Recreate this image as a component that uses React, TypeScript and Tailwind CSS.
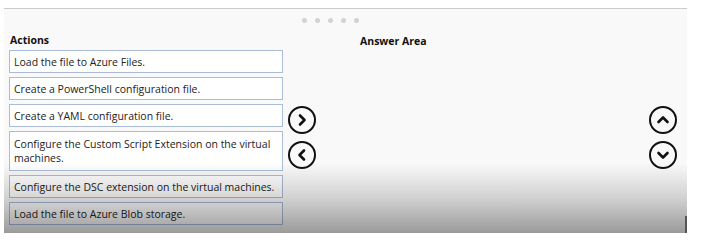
const ACTIONS = [
  { text: 'Load the file to Azure Files.', tall: false },
  { text: 'Create a PowerShell configuration file.', tall: false },
  { text: 'Create a YAML configuration file.', tall: false },
  { text: 'Configure the Custom Script Extension on the virtual machines.', tall: true },
  { text: 'Configure the DSC extension on the virtual machines.', tall: false },
  { text: 'Load the file to Azure Blob storage.', tall: false },
];

const CHEVRONS: Record<string, string> = {
  right: '5,2.5 9.5,7 5,11.5',
  left: '9,2.5 4.5,7 9,11.5',
  up: '2.5,9 7,4.5 11.5,9',
  down: '2.5,5 7,9.5 11.5,5',
};

function ArrowButton({ dir }: { dir: 'right' | 'left' | 'up' | 'down' }) {
  return (
    <button
      type="button"
      className="w-[28px] h-[28px] rounded-full border-[2.5px] border-[#111] flex items-center justify-center bg-transparent"
    >
      <svg width="14" height="14" viewBox="0 0 14 14" fill="none">
        <polyline points={CHEVRONS[dir]} stroke="#111" strokeWidth="2.6" strokeLinecap="round" strokeLinejoin="round" />
      </svg>
    </button>
  );
}

export default function App() {
  return (
    <div className="w-[701px] h-[243px] bg-white overflow-hidden" style={{ fontFamily: '"Open Sans", "Noto Sans", sans-serif' }}>
      <div className="pt-[8px]">
        <div className="relative ml-[4px] w-[683px] h-[225px] bg-[#f8f9f8] border-t border-[#c9cbc9]">
          {/* pager dots */}
          <div className="flex h-[22px] items-center gap-[8px] pl-[298px]">
            {[0, 1, 2, 3, 4].map(i => (
              <span key={i} className="w-[5px] h-[5px] rounded-full bg-[#d2d3d2]" />
            ))}
          </div>

          <div className="flex">
            {/* actions */}
            <div className="ml-[5px] w-[274px] flex flex-col">
              <div className="h-[19px] flex items-center pl-[1px] text-[10.5px] font-bold text-[#111]">Actions</div>
              <div className="flex flex-col gap-1">
                {ACTIONS.map(a => (
                  <div
                    key={a.text}
                    className={`${a.tall ? 'h-[40px]' : 'h-[23px]'} flex items-center border border-[#aabcd8] bg-white pl-[4px] pr-[2px] text-[10.5px] leading-[14px] text-[#222]`}
                  >
                    {a.text}
                  </div>
                ))}
              </div>
            </div>

            {/* move buttons */}
            <div className="w-[37px] flex flex-col items-center gap-[7px] pt-[75px]">
              <ArrowButton dir="right" />
              <ArrowButton dir="left" />
            </div>

            {/* answer area */}
            <div className="flex-1 pl-[40px]">
              <div className="h-[22px] flex items-center text-[10.5px] font-bold text-[#111]">Answer Area</div>
            </div>

            {/* order buttons */}
            <div className="w-[28px] mr-[10px] flex flex-col items-center gap-[7px] pt-[75px]">
              <ArrowButton dir="up" />
              <ArrowButton dir="down" />
            </div>
          </div>

          {/* video fade at the bottom */}
          <div className="pointer-events-none absolute left-0 right-0 bottom-0 h-[70px] bg-linear-to-b from-[rgba(0,0,0,0)] via-[rgba(0,0,0,0.16)] to-[rgba(0,0,0,0.38)]" />
          <div className="pointer-events-none absolute right-0 bottom-0 w-[2px] h-[17px] bg-[#555]" />
        </div>
      </div>
    </div>
  );
}
